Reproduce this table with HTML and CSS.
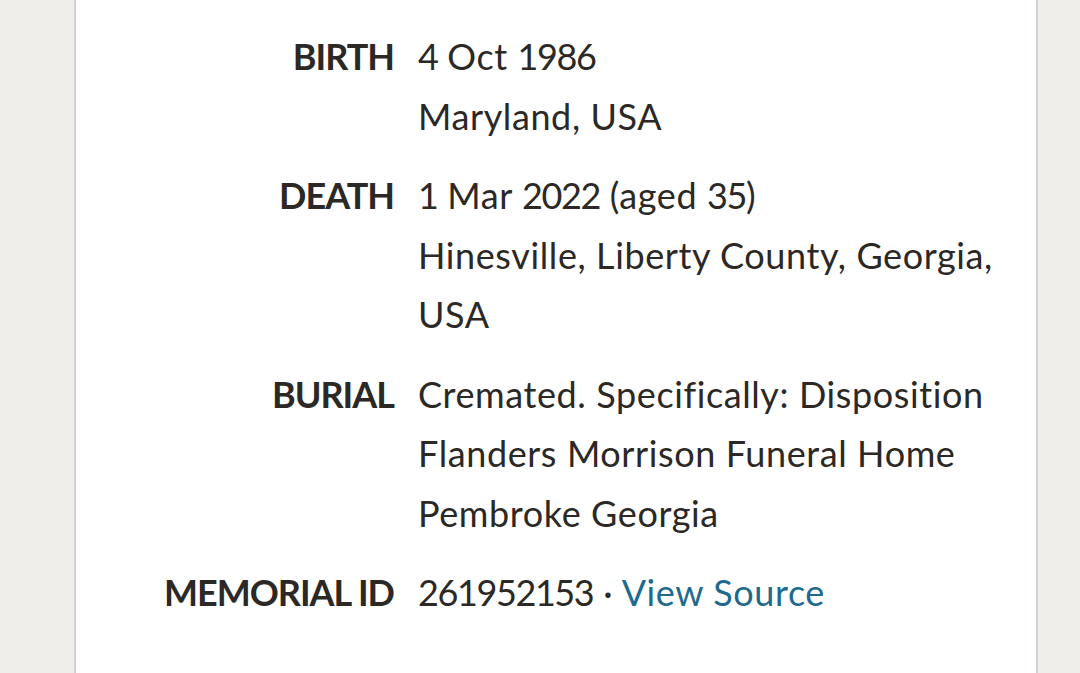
FILE: index.html
```html
<!DOCTYPE html>
<html lang="en">
<head>
<meta charset="utf-8">
<title>Memorial</title>
<link rel="stylesheet" href="styles.css">
</head>
<body>
<main class="page">
  <section class="card">
    <dl class="facts">
      <div class="fact">
        <dt class="label">BIRTH</dt>
        <dd class="value"><span class="num">4</span> Oct <span class="num">1986</span><br>Maryland, USA</dd>
      </div>
      <div class="fact">
        <dt class="label">DEATH</dt>
        <dd class="value"><span class="num">1</span> Mar <span class="num">2022</span> (aged <span class="num">35</span>)<br>Hinesville, Liberty County, Georgia, USA</dd>
      </div>
      <div class="fact">
        <dt class="label">BURIAL</dt>
        <dd class="value">Cremated. Specifically: Disposition Flanders Morrison Funeral Home Pembroke Georgia</dd>
      </div>
      <div class="fact">
        <dt class="label">MEMORIAL ID</dt>
        <dd class="value"><span class="num">261952153</span> · <a class="link" href="#">View Source</a></dd>
      </div>
    </dl>
  </section>
</main>
</body>
</html>
```
FILE: styles.css
```css
html, body {
  margin: 0;
  padding: 0;
  height: 100%;
  background: #efeeea;
  overflow: hidden;
}

.page {
  display: flex;
  height: 100%;
  padding-left: 74px;
}

.card {
  width: 964px;
  background: #ffffff;
  border-left: 2px solid #d3d2cf;
  border-right: 2px solid #d3d2cf;
  padding: 27px 30px 0 0;
  box-sizing: border-box;
}

.facts {
  margin: 0;
  display: flex;
  flex-direction: column;
  gap: 20px;
}

.fact {
  display: grid;
  grid-template-columns: 318px 1fr;
  column-gap: 24px;
  font-family: "Lato", "Open Sans", sans-serif;
  font-size: 36px;
  line-height: 59.5px;
  color: #2b2825;
}

.label {
  margin: 0;
  text-align: right;
  font-weight: 700;
  letter-spacing: -1px;
  white-space: nowrap;
}

.value {
  margin: 0;
  font-weight: 400;
  letter-spacing: 0.6px;
}

.num {
  letter-spacing: -1.4px;
}

.link {
  color: #1e6a8f;
  text-decoration: none;
}
```
